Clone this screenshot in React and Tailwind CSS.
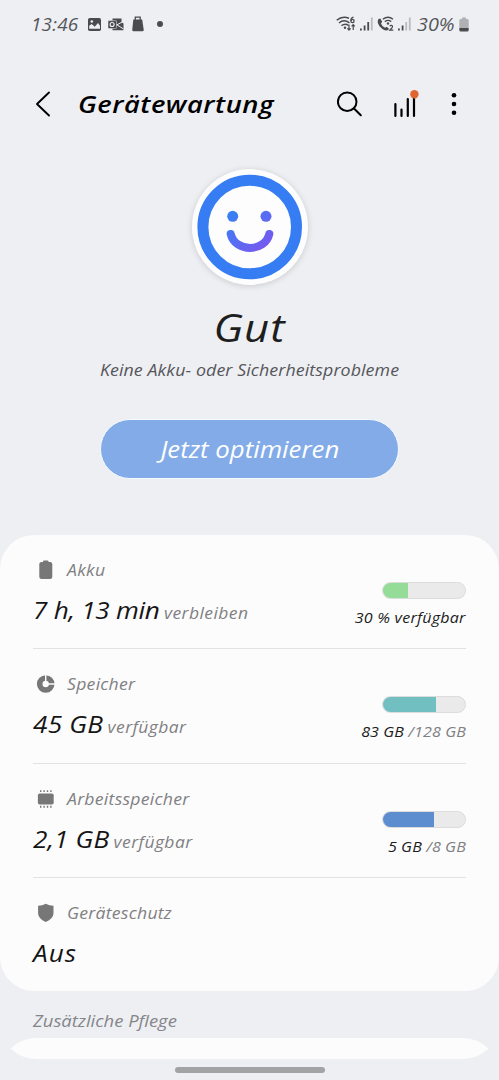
import React from 'react';

const rows = [
  {
    id: 'battery',
    label: 'Akku',
    value: '7 h, 13 min',
    valueClass: 'tracking-[-0.25px]',
    suffix: 'verbleiben',
    percent: 30,
    bar: 'bg-[#94dc98]',
    used: '30 % verfügbar',
    usedClass: 'tracking-[0.2px]',
    total: '',
  },
  {
    id: 'storage',
    label: 'Speicher',
    value: '45 GB',
    valueClass: 'tracking-[0.2px]',
    suffix: 'verfügbar',
    percent: 65,
    bar: 'bg-[#72bfc2]',
    used: '83 GB ',
    usedClass: 'tracking-[0.1px]',
    total: '/128 GB',
  },
  {
    id: 'memory',
    label: 'Arbeitsspeicher',
    value: '2,1 GB',
    valueClass: 'tracking-[0.1px]',
    suffix: 'verfügbar',
    percent: 62,
    bar: 'bg-[#5d8dce]',
    used: '5 GB ',
    usedClass: 'tracking-[0.1px]',
    total: '/8 GB',
  },
  {
    id: 'security',
    label: 'Geräteschutz',
    value: 'Aus',
    valueClass: 'tracking-[0.9px]',
  },
];

// --- Icons ---
function RowIcon({ id }) {
  return (
    <svg width="20" height="20" viewBox="0 0 20 20" fill="#777" className="shrink-0">
      {id === 'battery' && (
        <>
          <rect x="7" y="0.5" width="5.4" height="3" rx="0.8" />
          <rect x="3.3" y="2" width="13" height="17" rx="2.2" />
        </>
      )}
      {id === 'storage' && (
        <>
          <circle cx="9.7" cy="10" r="6" fill="none" stroke="#777" strokeWidth="5.6" />
          <path d="M9.7 10V0.5M9.7 10H19.5" stroke="#fcfcfc" strokeWidth="1.4" />
        </>
      )}
      {id === 'memory' && (
        <>
          <rect x="1.9" y="4.5" width="15.8" height="11" rx="1.8" />
          <path
            d="M4.7 1.2v1.9M8.1 1.2v1.9M11.5 1.2v1.9M14.9 1.2v1.9M4.7 16.8v1.9M8.1 16.8v1.9M11.5 16.8v1.9M14.9 16.8v1.9"
            stroke="#777"
            strokeWidth="1.4"
          />
        </>
      )}
      {id === 'security' && (
        <path d="M9.8 0.8C12 2 14.8 2.7 17.5 2.8V10c0 4.2-3.7 7.2-7.7 9C5.8 17.2 2.1 14.2 2.1 10V2.8C4.8 2.7 7.6 2 9.8 0.8Z" />
      )}
    </svg>
  );
}

function Signal({ active }) {
  return (
    <svg width="14" height="15" viewBox="0 0 14 15">
      <rect x="0" y="11.5" width="1.8" height="2" fill="#4a4b4e" />
      <rect x="3.7" y="8.5" width="1.8" height="5" fill="#4a4b4e" />
      <rect x="7.3" y="5" width="1.8" height="8.5" fill={active > 2 ? '#4a4b4e' : '#bbbcbf'} />
      <rect x="10.9" y="0.5" width="1.8" height="13" fill="#bbbcbf" />
    </svg>
  );
}

function StatusBar() {
  return (
    <div className="flex h-12 items-center justify-between pl-[31px] pr-[30px] text-[18px] text-[#55565a]">
      <div className="flex items-center">
        <span className="w-[57px] origin-left scale-x-[1.05] tracking-[0.2px] whitespace-nowrap">13:46</span>
        <svg width="13" height="13" viewBox="0 0 13 13">
          <rect width="13" height="13" rx="1.8" fill="#4a4b4e" />
          <path d="M1.2 10.8V7.7L3.7 6l3 2.8L10 5l2 2.7v3.1Z" fill="#eeeff3" />
          <circle cx="3.8" cy="3.5" r="1.3" fill="#eeeff3" />
        </svg>
        <svg width="16" height="13" viewBox="0 0 16 13" className="ml-[7px]">
          <path d="M4.5 0.5H13.5V4L15.5 5.5V12.3H4.5Z" fill="#4a4b4e" />
          <path d="M8.5 7L15.5 3.5M8.5 6.5L15.5 11" stroke="#eeeff3" strokeWidth="1" />
          <rect x="0" y="2.6" width="8.5" height="8" rx="1" fill="#4a4b4e" stroke="#eeeff3" strokeWidth="0.5" />
          <circle cx="4.1" cy="6.5" r="2" fill="none" stroke="#eeeff3" strokeWidth="1.1" />
        </svg>
        <svg width="12" height="16" viewBox="0 0 12 16" className="ml-[8px]">
          <path d="M1.3 3.5H10.2L11.8 14.3L10.8 15.3H1.2L0.2 14.3Z" fill="#4a4b4e" />
          <path d="M3.3 4V1.2H8.2V4" fill="none" stroke="#4a4b4e" strokeWidth="1.3" />
        </svg>
        <span className="ml-[13px] size-[6px] rounded-full bg-[#4a4b4e]" />
      </div>
      <div className="flex items-center">
        <svg width="20" height="16" viewBox="0 0 20 16" fill="none" stroke="#4a4b4e" strokeWidth="1.5">
          <path d="M0.7 4.3C5 0.5 9 0.5 13 2.2M3 7C6 4.3 10 4.3 13.5 6.8M5.5 9.6C8 7.8 10.5 7.9 12.5 9.5" />
          <circle cx="9" cy="11.7" r="1.2" fill="#4a4b4e" stroke="none" />
          <circle cx="16.5" cy="5" r="1.6" strokeWidth="1.3" />
          <path d="M14.9 5C14.8 3 15.7 1.5 17.5 1.2" strokeWidth="1.3" />
          <path d="M13 8.5V14M11.4 12.3L13 14L14.6 12.3M17.2 14V8.7M15.6 10.4L17.2 8.7L18.8 10.4" strokeWidth="1.2" />
        </svg>
        <span className="ml-[4px]"><Signal active={3} /></span>
        <svg width="17" height="16" viewBox="0 0 17 16" fill="none" className="ml-[3px]">
          <path
            d="M1.5 3L3.3 2.5L5.2 5.8L4 7.4C5 9.7 6.4 10.9 8.2 11.7L9.6 10.7L12 12.7C11 15 8.5 14.7 6.2 13.4C2.5 11.3-0.8 6.5 1.5 3Z"
            fill="#4a4b4e"
          />
          <path d="M5.8 3.2C9 0.8 13 0.8 16 3.2M7.8 5.6C10 4 12.3 4 14.2 5.6" stroke="#4a4b4e" strokeWidth="1.4" />
          <circle cx="11" cy="7.5" r="1.2" fill="#4a4b4e" />
          <path d="M12.8 10.2C13.5 8.8 15.8 9.2 15.5 10.9C15.3 12 13.7 13 12.7 14.2H16.3" stroke="#4a4b4e" strokeWidth="1.2" />
        </svg>
        <span className="ml-[4px]"><Signal active={2} /></span>
        <span className="ml-[5px] w-[42px] origin-left scale-x-[1.1] whitespace-nowrap">30%</span>
        <svg width="10" height="15" viewBox="0 0 10 15">
          <path d="M3 0.5H7V2H8.5Q9.7 2 9.7 3.5V11H0.3V3.5Q0.3 2 1.5 2H3Z" fill="#b0b1b4" />
          <path d="M0.3 11H9.7V13Q9.7 14.5 8.2 14.5H1.8Q0.3 14.5 0.3 13Z" fill="#4a4b4e" />
        </svg>
      </div>
    </div>
  );
}

function Header() {
  return (
    <header className="flex h-28 items-center pl-[35px] pr-[42px]">
      <svg width="16" height="26" viewBox="0 0 16 26" fill="none" stroke="#000" strokeWidth="1.9" strokeLinecap="round" strokeLinejoin="round">
        <path d="M14 1.5L2 13L14 24.5" />
      </svg>
      <h1 className="ml-[27px] grow origin-left scale-x-[1.14] text-[24px] font-semibold tracking-[0.45px] text-black">
        Gerätewartung
      </h1>
      <svg width="26" height="26" viewBox="0 0 26 26" fill="none" stroke="#000" strokeWidth="2" strokeLinecap="round" className="mr-[31px]">
        <circle cx="10.2" cy="10.7" r="9.3" />
        <path d="M17 17.5L23.8 24.3" />
      </svg>
      <svg width="26" height="28" viewBox="0 0 26 28" fill="none" stroke="#000" strokeWidth="2.2" strokeLinecap="round" className="mr-[31px]">
        <path d="M1.4 14V26M7.5 19.5V26M13.8 9V26M20 5V26" />
        <circle cx="20.4" cy="4.2" r="4.2" fill="#e0662f" stroke="none" />
      </svg>
      <svg width="6" height="24" viewBox="0 0 6 24">
        <circle cx="3" cy="3.2" r="2.3" />
        <circle cx="3" cy="12" r="2.3" />
        <circle cx="3" cy="20.7" r="2.3" />
      </svg>
    </header>
  );
}

function Smiley() {
  return (
    <div className="mx-auto size-[116px] rounded-full bg-[#fdfdfe] shadow-[0_1px_6px_rgba(0,0,0,0.15)]">
      <svg width="116" height="116" viewBox="0 0 116 116" fill="none">
        <defs>
          <linearGradient id="face" gradientUnits="userSpaceOnUse" x1="36" y1="44" x2="72" y2="84">
            <stop offset="0" stopColor="#3582f4" />
            <stop offset="1" stopColor="#7a57f0" />
          </linearGradient>
        </defs>
        <circle cx="57.7" cy="58" r="46.8" stroke="#367df3" strokeWidth="11" />
        <circle cx="40.700" cy="47.3" r="5.5" fill="url(#face)" />
        <circle cx="74" cy="47.3" r="5.5" fill="url(#face)" />
        <path d="M38.7 65C43 83.5 73 83.5 77.3 65" stroke="url(#face)" strokeWidth="8" strokeLinecap="round" />
      </svg>
    </div>
  );
}

function Row({ row }) {
  return (
    <div className="flex h-[114.4px] justify-between border-b border-[#e2e2e2] last:border-b-0">
      <div className="pt-6">
        <div className="flex h-[22px] items-center gap-[11px] pl-[3px] text-[16px] text-[#808083]">
          <RowIcon id={row.id} />
          <span className="origin-left scale-x-[1.1] tracking-[0.25px]">{row.label}</span>
        </div>
        <div className="mt-[13px] origin-left scale-x-[1.09] whitespace-nowrap leading-[32px]">
          <span className={`text-[24px] text-[#151515] ${row.valueClass}`}>{row.value}</span>
          {row.suffix && (
            <span className="ml-[4px] text-[16px] tracking-[0.4px] text-[#808083]">{row.suffix}</span>
          )}
        </div>
      </div>
      {row.used && (
        <div className="flex flex-col items-end pt-[47px]">
          <div className="h-[17px] w-[84px] overflow-hidden rounded-full border border-[#dcdcdc] bg-[#eaeaea]">
            <div className={`h-full ${row.bar}`} style={{ width: `${row.percent}%` }} />
          </div>
          <p className={`mt-[8px] origin-right scale-x-[1.07] whitespace-pre text-[15px] leading-5 text-[#1c1c1c] ${row.usedClass}`}>
            {row.used}
            <span className="text-[#808083]">{row.total}</span>
          </p>
        </div>
      )}
    </div>
  );
}

export default function App() {
  return (
    <div className="flex h-[1080px] w-[499px] flex-col overflow-hidden bg-[#eeeff3] font-['Open_Sans','Noto_Sans',sans-serif] font-normal italic">
      <StatusBar />
      <Header />
      <section className="flex h-[375px] shrink-0 flex-col pt-[9px] text-center">
        <Smiley />
        <h2 className="mt-[18px] scale-x-[1.12] text-[39px] leading-[48px] tracking-[0.8px] text-[#1d1e20]">Gut</h2>
        <p className="mt-[7px] scale-x-[1.11] text-[16px] leading-6 tracking-[0.1px] text-[#55565a]">
          Keine Akku- oder Sicherheitsprobleme
        </p>
        <button className="mx-auto mt-[37px] h-[60px] w-[299px] shrink-0 rounded-full border border-[#f5faff] bg-[#82abe8] text-[23px] text-white italic">
          <span className="inline-block scale-x-[1.12]">Jetzt optimieren</span>
        </button>
      </section>
      <section className="h-[456px] shrink-0 rounded-[34px] bg-[#fcfcfc] px-[33px]">
        {rows.map((row) => (
          <Row key={row.id} row={row} />
        ))}
      </section>
      <p className="mt-[18px] h-[29px] pl-[33px] text-[16px] leading-6 font-medium text-[#85868a]">
        <span className="inline-block origin-left scale-x-[1.15]">Zusätzliche Pflege</span>
      </p>
      {/* Next card, cut off above the gesture bar */}
      <div className="h-[11px] shrink-0 overflow-hidden">
        <div className="h-20 rounded-[36px] bg-[#fcfcfc]" />
      </div>
      <div className="flex h-[10px] shrink-0 flex-col justify-end overflow-hidden">
        <div className="h-20 shrink-0 rounded-[36px] bg-[#fcfcfc]" />
      </div>
      <div className="mx-auto mt-[8px] h-[6px] w-[150px] shrink-0 rounded-full bg-[#a2a3a4]" />
    </div>
  );
}
